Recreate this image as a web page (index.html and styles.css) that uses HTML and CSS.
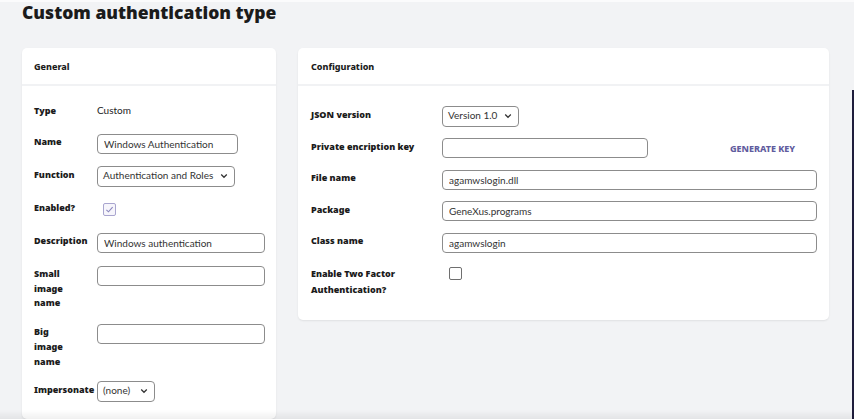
FILE: index.html
```html
<!DOCTYPE html>
<html lang="en">
<head>
    <meta charset="UTF-8">
    <meta name="viewport" content="width=device-width, initial-scale=1.0">
    <title>Custom authentication type</title>
    <link rel="stylesheet" href="styles.css">
</head>
<body>
    <div class="page">
        <h1>Custom authentication type</h1>

        <div class="cards">
            <div class="card card-general">
                <div class="card-head">General</div>
                <div class="card-body form form-general">
                    <label class="lbl">Type</label>
                    <div class="val">Custom</div>

                    <label class="lbl">Name</label>
                    <div class="ctl"><input class="inp w-name" type="text" value="Windows Authentication"></div>

                    <label class="lbl">Function</label>
                    <div class="ctl">
                        <div class="sel w-func">Authentication and Roles
                            <svg class="chev" viewBox="0 0 10 6"><path d="M1.5 1.2 5 4.6 8.5 1.2"/></svg>
                        </div>
                    </div>

                    <label class="lbl">Enabled?</label>
                    <div class="ctl"><span class="chk checked">
                        <svg viewBox="0 0 12 12"><path d="M2.6 6.3 4.9 8.5 9.4 3.3"/></svg>
                    </span></div>

                    <label class="lbl">Description</label>
                    <div class="ctl"><input class="inp w-full" type="text" value="Windows authentication"></div>

                    <label class="lbl">Small image name</label>
                    <div class="ctl"><input class="inp w-full" type="text" value=""></div>

                    <label class="lbl">Big image name</label>
                    <div class="ctl"><input class="inp w-full" type="text" value=""></div>

                    <label class="lbl">Impersonate</label>
                    <div class="ctl">
                        <div class="sel w-imp">(none)
                            <svg class="chev" viewBox="0 0 10 6"><path d="M1.5 1.2 5 4.6 8.5 1.2"/></svg>
                        </div>
                    </div>
                </div>
            </div>

            <div class="card card-config">
                <div class="card-head">Configuration</div>
                <div class="card-body form form-config">
                    <label class="lbl">JSON version</label>
                    <div class="ctl">
                        <div class="sel w-json">Version 1.0
                            <svg class="chev" viewBox="0 0 10 6"><path d="M1.5 1.2 5 4.6 8.5 1.2"/></svg>
                        </div>
                    </div>

                    <label class="lbl">Private encription key</label>
                    <div class="ctl key-row">
                        <input class="inp w-key" type="text" value="">
                        <a class="gen-key">GENERATE KEY</a>
                    </div>

                    <label class="lbl">File name</label>
                    <div class="ctl"><input class="inp w-full" type="text" value="agamwslogin.dll"></div>

                    <label class="lbl">Package</label>
                    <div class="ctl"><input class="inp w-full" type="text" value="GeneXus.programs"></div>

                    <label class="lbl">Class name</label>
                    <div class="ctl"><input class="inp w-full" type="text" value="agamwslogin"></div>

                    <label class="lbl lbl-wide">Enable Two Factor Authentication?</label>
                    <div class="ctl ctl-top"><span class="chk"></span></div>
                </div>
            </div>
        </div>
    </div>
</body>
</html>
```

FILE: styles.css
```css
*{
    box-sizing: border-box;
}
body{
    margin: 0;
    background-color: #f2f3f5;
    font-family: Lato, "Noto Sans", Arial, sans-serif;
    color: #1b1b1b;
    height: 419px;
    overflow: hidden;
    border-top: 2px solid #fbfbfc;
}
/* window edge and bottom shade from the capture */
body::after{
    content: "";
    position: fixed;
    top: 90px;
    right: 0;
    bottom: 0;
    width: 2px;
    background-color: #1f1d3d;
}
body::before{
    content: "";
    position: fixed;
    left: 0;
    right: 0;
    bottom: 0;
    height: 9px;
    background: linear-gradient(rgba(0, 0, 0, 0), rgba(0, 0, 0, 0.06));
    z-index: 2;
}
.page{
    padding: 0 22px;
}
h1{
    margin: 0;
    font-family: "Noto Sans", sans-serif;
    font-size: 17.5px;
    font-weight: 900;
    line-height: 20px;
}
.cards{
    display: flex;
    align-items: flex-start;
    gap: 22px;
    margin-top: 26px;
}
.card{
    background-color: #fff;
    border-radius: 5px;
    box-shadow: 0 1px 2px rgba(0, 0, 0, 0.08);
}
.card-general{
    width: 254px;
    height: 371px;
}
.card-config{
    width: 531px;
}
.card-head{
    height: 38px;
    display: flex;
    align-items: center;
    padding: 0 12px;
    font-family: "Noto Sans", sans-serif;
    font-size: 9px;
    font-weight: 800;
    border-bottom: 2px solid #f1f2f4;
}
.card-config .card-head{
    padding-left: 13px;
}

/* form grids */
.form{
    display: grid;
    row-gap: 12px;
    align-items: start;
}
.form-general{
    grid-template-columns: 63px 1fr;
    padding: 14px 11px 0 12px;
}
.form-config{
    grid-template-columns: 131px 1fr;
    row-gap: 10.5px;
    padding: 20px 12px 22px 13px;
}
.lbl{
    font-family: "Noto Sans", sans-serif;
    font-size: 9px;
    font-weight: 900;
    line-height: 14.7px;
    padding-top: 2px;
}
.form-general .lbl{
    width: 36px;
}
.form-general .lbl:first-child{
    padding-top: 4px;
}
.lbl-wide{
    width: 110px;
    line-height: 16px;
}
.val{
    font-size: 10px;
    line-height: 21px;
    color: #222;
}
.ctl{
    min-height: 21px;
    display: flex;
    align-items: center;
}
.ctl-top{
    align-items: flex-start;
}
.inp{
    height: 20px;
    border: 1px solid #8c8c8c;
    border-radius: 4px;
    padding: 0 6px;
    font-family: inherit;
    font-size: 10px;
    color: #333;
    background-color: #fff;
}
.w-name{ width: 141px; }
.w-full{ width: 100%; }
.w-key{ width: 206px; }
.sel{
    height: 21px;
    border: 1px solid #8c8c8c;
    border-radius: 4px;
    padding: 0 6px 3px 5px;
    font-size: 10px;
    color: #333;
    display: flex;
    align-items: center;
    justify-content: space-between;
}
.w-func{ width: 138px; }
.w-imp{ width: 58px; }
.w-json{ width: 77px; }
.chev{
    width: 8px;
    height: 6px;
    margin-top: 2px;
    fill: none;
    stroke: #333;
    stroke-width: 1.6;
}
.chk{
    width: 13px;
    height: 13px;
    margin-left: 6px;
    border: 1px solid #777;
    border-radius: 2px;
    display: flex;
    align-items: center;
    justify-content: center;
}
.chk.checked{
    border-color: #a9a5cf;
    background-color: #f6f5fb;
}
.chk svg{
    width: 11px;
    height: 11px;
    fill: none;
    stroke: #8a86bd;
    stroke-width: 1.2;
}
.form-config .chk{
    margin-left: 7px;
    margin-top: 3px;
    border-color: #6f6f6f;
}
.key-row{
    gap: 82px;
}
.gen-key{
    font-family: "Noto Sans", sans-serif;
    font-size: 9px;
    font-weight: 800;
    color: #5f5c9e;
}
```
